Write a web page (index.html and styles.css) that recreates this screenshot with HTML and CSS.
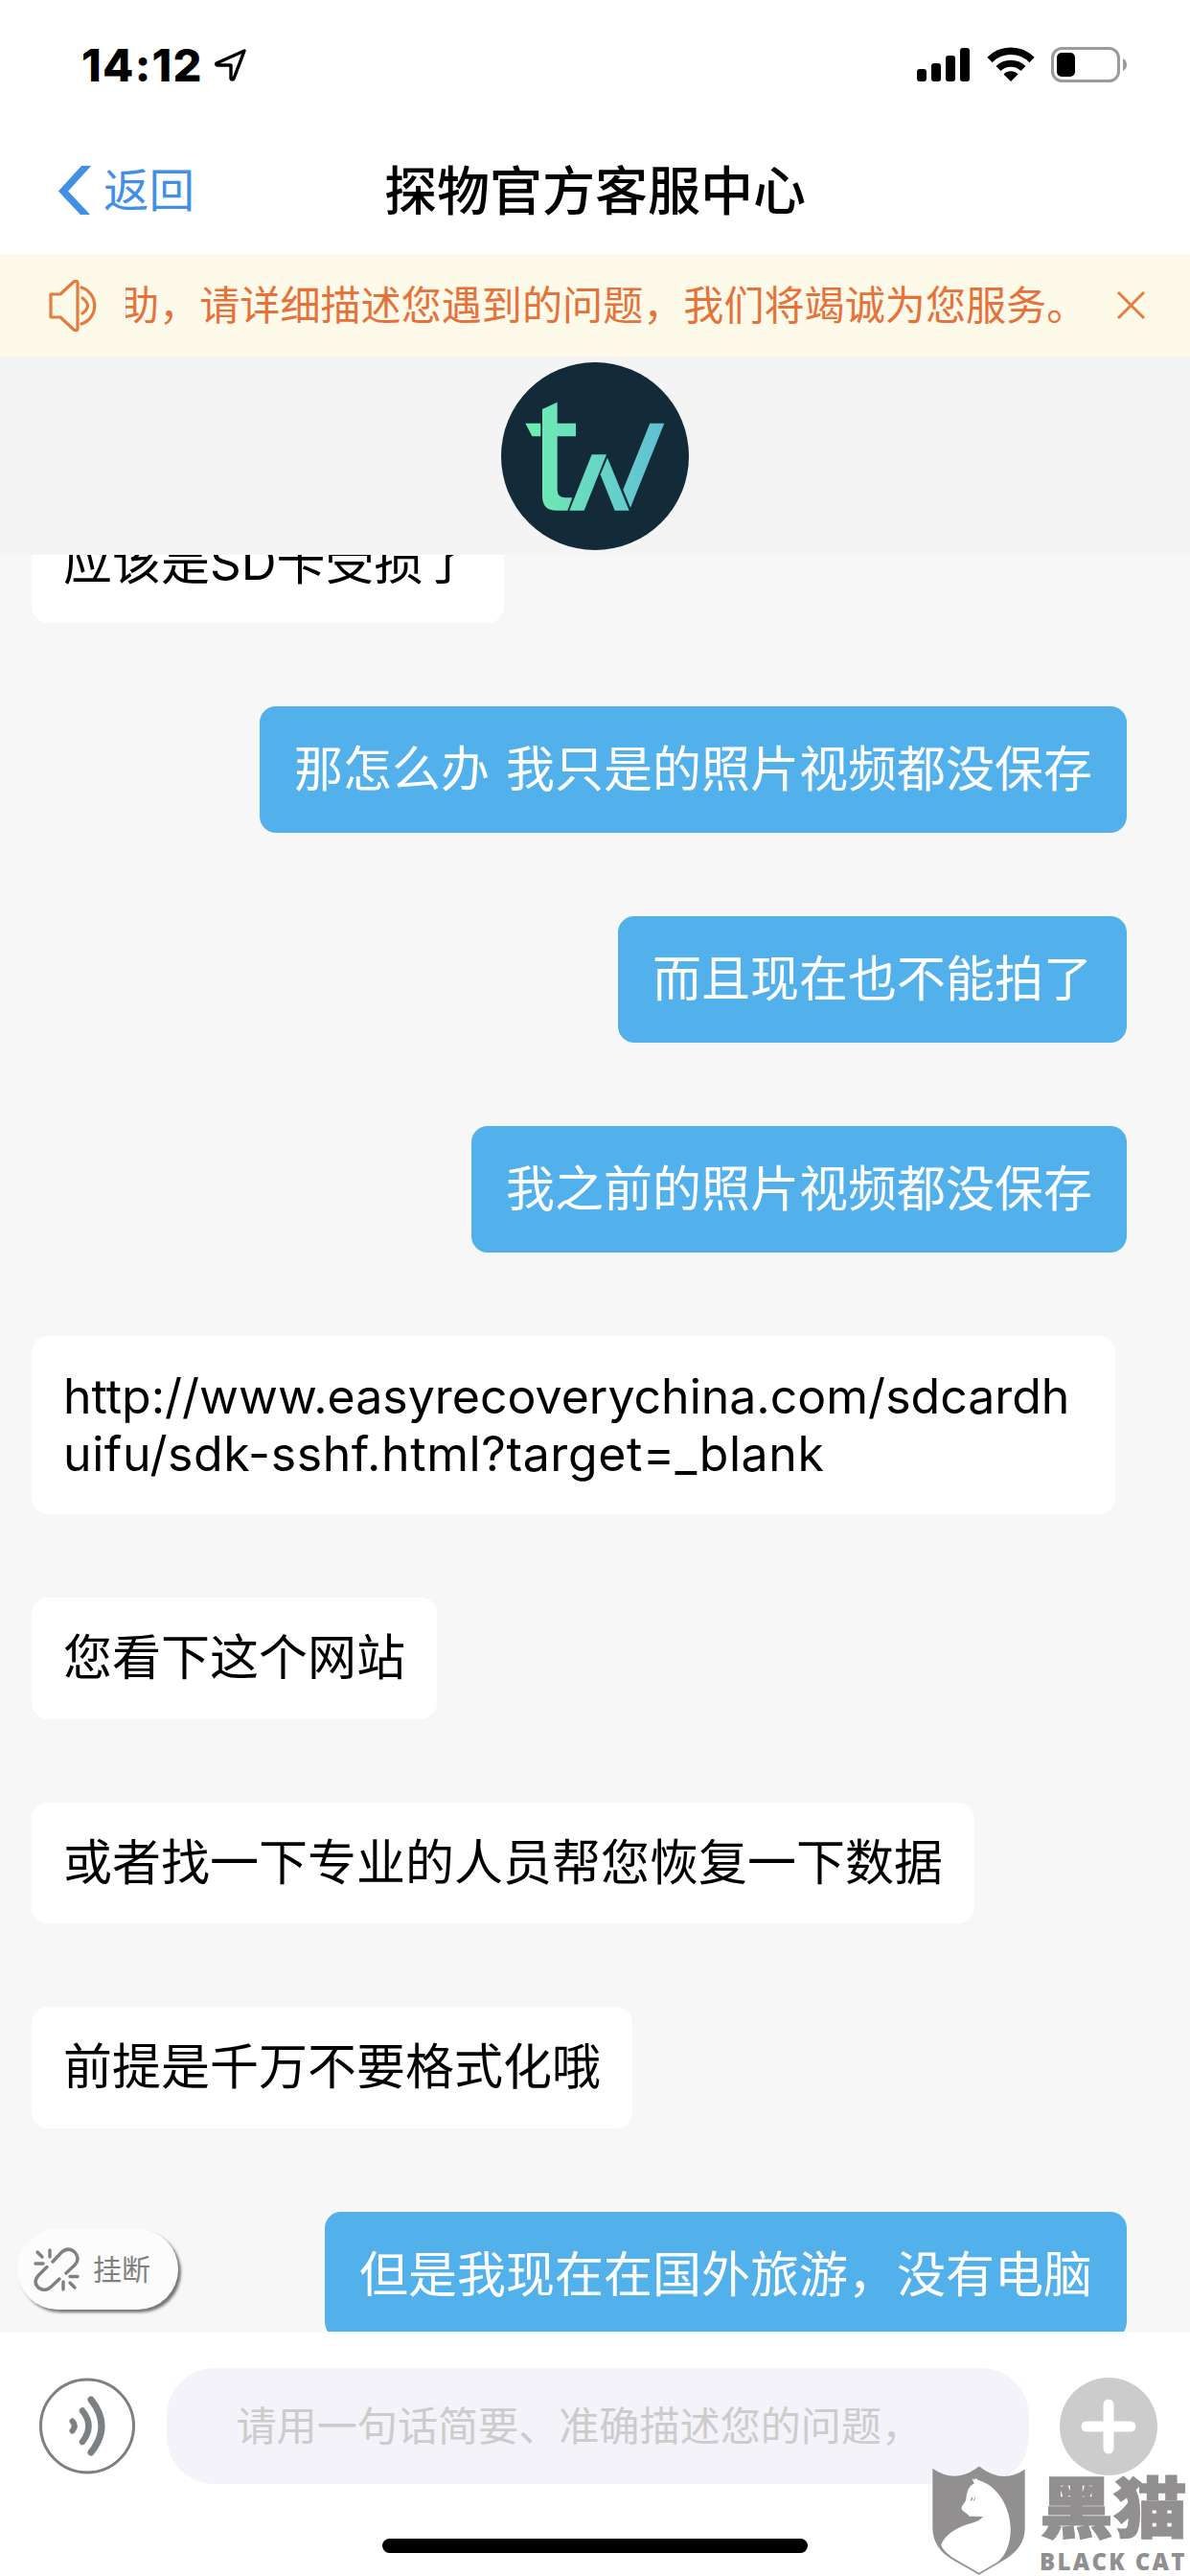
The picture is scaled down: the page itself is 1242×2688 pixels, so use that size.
FILE: index.html
```html
<!DOCTYPE html>
<html lang="zh-CN">
<head>
    <meta charset="UTF-8">
    <meta name="viewport" content="width=device-width, initial-scale=1.0">
    <title>探物官方客服中心</title>
    <link rel="stylesheet" href="styles.css">
</head>
<body>

    <div class="status-bar">
        <div class="status-left">
            <span class="time">14:12</span>
            <svg class="location" viewBox="0 0 34 34"><path d="M31 2 L2 15 Q1 17 3 17 L17 17 L17 31 Q18 33 20 31 Z" fill="none" stroke="#000" stroke-width="3.4" stroke-linejoin="round"/></svg>
        </div>
        <div class="status-right">
            <svg class="signal" viewBox="0 0 56 36">
                <rect x="0" y="22" width="10" height="13" rx="3"/>
                <rect x="15" y="16" width="10" height="19" rx="3"/>
                <rect x="30" y="8" width="10" height="27" rx="3"/>
                <rect x="45" y="0" width="10" height="35" rx="3"/>
            </svg>
            <svg class="wifi" viewBox="0 0 50 36">
                <path d="M3 13.5 A31 31 0 0 1 47 13.5" fill="none" stroke="#000" stroke-width="7.5"/>
                <path d="M12 22.5 A18.5 18.5 0 0 1 38 22.5" fill="none" stroke="#000" stroke-width="7"/>
                <path d="M25 36 L17.5 28.5 A10.5 10.5 0 0 1 32.5 28.5 Z"/>
            </svg>
            <svg class="battery" viewBox="0 0 80 37">
                <rect x="1.5" y="1.5" width="69" height="34" rx="10" fill="none" stroke="#9b9b9b" stroke-width="3"/>
                <rect x="6" y="6" width="19" height="25" rx="5"/>
                <path d="M75 12 Q79 14 79 18.5 Q79 23 75 25 Z" fill="#9b9b9b"/>
            </svg>
        </div>
    </div>

    <div class="nav-bar">
        <a class="back" href="#">
            <svg viewBox="0 0 36 51"><path d="M32 -2 L6 26.5 L31 53" fill="none" stroke="#4290e6" stroke-width="7.5"/></svg>
            <span>返回</span>
        </a>
        <h1>探物官方客服中心</h1>
        <div class="nav-space"></div>
    </div>

    <div class="notice">
        <svg class="speaker" viewBox="0 0 52 54" fill="none" stroke="#e77b3c" stroke-width="3.2" stroke-linejoin="round" stroke-linecap="round">
            <path d="M2 15 H12 L26 2 Q30 0 30 3 V51 Q30 54 26 52 L12 39 H2 Z"/>
            <path d="M34 8 A20 20 0 0 1 34 46"/>
            <path d="M35 19 Q46 27 35 35"/>
        </svg>
        <div class="notice-text"><span>助，请详细描述您遇到的问题，我们将竭诚为您服务。</span></div>
        <svg class="close" viewBox="0 0 30 30"><path d="M1 1 L29 29 M29 1 L1 29" stroke="#e77b3c" stroke-width="3"/></svg>
    </div>

    <div class="agent">
        <svg class="logo" viewBox="129 53 588 588">
            <defs>
                <linearGradient id="mint" gradientUnits="userSpaceOnUse" x1="205" y1="0" x2="640" y2="0">
                    <stop offset="0" stop-color="#70eeb0"/>
                    <stop offset="1" stop-color="#5fbfd6"/>
                </linearGradient>
            </defs>
            <circle cx="423" cy="347" r="294" fill="#132b38"/>
            <g fill="url(#mint)">
                <path d="M205 244 H253 V285 H226 Z"/>
                <path d="M258 200 L305 178 V244 H363 V285 H305 V452 Q305 477 330 477 H352 L337 517 H303 Q258 517 258 472 Z"/>
                <path d="M343 517 H389 L459 342 H413 Z"/>
                <path d="M462 352 L530 517 H485 L440 405 Z"/>
                <path d="M595 244 H640 L534 508 L511 452 Z"/>
            </g>
        </svg>
    </div>

    <div class="chat">
        <div class="msg">应该是SD卡受损了</div>
        <div class="msg mine">那怎么办 我只是的照片视频都没保存</div>
        <div class="msg mine">而且现在也不能拍了</div>
        <div class="msg mine">我之前的照片视频都没保存</div>
        <div class="msg link">http://www.easyrecoverychina.com/sdcardh<br><span class="line2">uifu/sdk-sshf.html?target=_blank</span></div>
        <div class="msg">您看下这个网站</div>
        <div class="msg">或者找一下专业的人员帮您恢复一下数据</div>
        <div class="msg">前提是千万不要格式化哦</div>
        <div class="msg mine">但是我现在在国外旅游，没有电脑</div>

        <button class="hang-up">
            <svg viewBox="0 0 48 46" fill="none" stroke="#808080" stroke-width="3.4" stroke-linecap="round">
                <path d="M20 15 L29 5.5 Q36 -1 43 5 Q49 12 43 18.5 L34 27"/>
                <path d="M14 20.5 L5 29.5 Q-1 36 5 42 Q12 47 18 41.5 L27 33"/>
                <path d="M4 5 L9 10 M17 3 V10 M2 17 H10 M38 30.5 H46 M31 36 V44 M38 37 L43 42"/>
            </svg>
            <span>挂断</span>
        </button>
    </div>

    <div class="footer">
        <div class="input-row">
            <svg class="voice" viewBox="0 0 100 101" fill="none" stroke="#7b8083" stroke-linecap="round">
                <circle cx="50" cy="50.5" r="48.5" stroke-width="3"/>
                <path d="M34.5 45.5 Q39 50.5 34.5 55.5" stroke-width="6"/>
                <path d="M45 34.5 Q58 50.5 45 67" stroke-width="6.5"/>
                <path d="M54 23 Q76 50.5 54 78" stroke-width="7"/>
            </svg>
            <div class="input">请用一句话简要、准确描述您的问题，</div>
            <svg class="plus" viewBox="0 0 102 102">
                <circle cx="51" cy="51" r="51" fill="#ccc"/>
                <path d="M51 28 V74 M28 51 H74" stroke="#fff" stroke-width="11" stroke-linecap="round"/>
            </svg>
        </div>
        <div class="home-bar"></div>
    </div>

    <div class="watermark">
        <svg class="shield" viewBox="69 69 292 345">
            <path d="M70 77 Q143 128 216 70 Q289 128 360 80 V262 C360 320 325 347 285 370 L216 411 L130 362 C95 340 70 310 70 262 Z" fill="#918f90"/>
            <path d="M194 108 L202 112 L206 107 L212 113 C260 125 312 180 315 265 C316 310 300 350 274 371 L216 405 L135 358 C115 345 100 330 97 316 C110 285 140 265 180 252 C205 246 220 240 228 228 L185 227 C178 215 160 212 161 200 C163 190 176 185 176 165 C180 140 188 130 201 124 Z" fill="#fff"/>
            <path d="M190 178 Q188 168 198 166 L193 178 Z M204 167 Q206 177 196 181 Z" fill="#918f90"/>
        </svg>
        <div class="brand">
            <div class="brand-cn">黑猫</div>
            <div class="brand-en">BLACK CAT</div>
        </div>
    </div>

</body>
</html>
```
FILE: styles.css
```css
* {
    box-sizing: border-box;
}
body {
    position: relative;
    margin: 0;
    width: 1242px;
    height: 2688px;
    display: flex;
    flex-direction: column;
    overflow: hidden;
    background-color: #fff;
    font-family: Inter, "Noto Sans CJK SC", sans-serif;
}
svg {
    display: block;
    flex: none;
}

/* Status bar */
.status-bar {
    height: 132px;
    padding: 49px 65px 0 85px;
    display: flex;
    justify-content: space-between;
}
.status-left, .status-right {
    display: flex;
}
.time {
    width: 139px;
    font-weight: 800;
    font-size: 47px;
    line-height: 37px;
    letter-spacing: 1.3px;
}
.location {
    width: 34px;
    height: 34px;
    margin-top: 2px;
}
.signal {
    width: 56px;
    height: 36px;
    margin: 1px 17px 0 0;
}
.wifi {
    width: 50px;
    height: 36px;
    margin-right: 17px;
}
.battery {
    width: 80px;
    height: 37px;
}

/* Navigation */
.nav-bar {
    height: 133px;
    padding: 0 60px;
    display: flex;
    justify-content: space-between;
    align-items: center;
}
.back {
    width: 150px;
    display: flex;
    align-items: center;
    color: #4290e6;
    font-size: 47.5px;
    line-height: 60px;
    text-decoration: none;
}
.back svg {
    width: 36px;
    height: 51px;
    margin-right: 12px;
}
.nav-space {
    width: 150px;
}
h1 {
    margin: 0;
    font-size: 55px;
    font-weight: 500;
    line-height: 66px;
    white-space: nowrap;
}

/* Notice */
.notice {
    height: 107px;
    padding: 0 47px 0 51px;
    display: flex;
    align-items: center;
    background-color: #fdfaea;
    color: #e5723a;
}
.speaker {
    width: 52px;
    height: 54px;
    margin-right: 28px;
}
.notice-text {
    width: 1000px;
    margin-right: 35px;
    display: flex;
    overflow: hidden;
    font-size: 42.1px;
    line-height: 60px;
    white-space: nowrap;
}
.notice-text span {
    margin-left: -7px;
}
.close {
    width: 29px;
    height: 29px;
}

.agent {
    height: 207px;
    padding-top: 6px;
    display: flex;
    justify-content: center;
    background-color: #f4f4f4;
}
.logo {
    width: 196px;
    height: 196px;
}

/* Chat */
.chat {
    position: relative;
    height: 1855px;
    padding: 0 66px 0 33px;
    display: flex;
    flex-direction: column;
    align-items: flex-start;
    gap: 87px;
    overflow: hidden;
    background-color: #f7f7f7;
    border-bottom: 1px solid #f7f7f7;
}
.msg {
    flex: none;
    padding: 33px;
    border-radius: 17px;
    background-color: #fff;
    color: #000;
    font-size: 51px;
    line-height: 60.5px;
    white-space: nowrap;
}
.msg:first-child {
    margin-top: -55.5px;
}
.mine {
    align-self: flex-end;
    padding: 36px;
    background-color: #52b1ea;
    color: #fff;
    line-height: 60px;
    word-spacing: 2.6px;
}
.link {
    width: 1131px;
    font-size: 50px;
    line-height: 60px;
}
.line2 {
    letter-spacing: 0.6px;
}
.hang-up {
    position: absolute;
    left: 18px;
    top: 1747px;
    width: 168px;
    height: 84px;
    padding: 0 0 0 17px;
    display: flex;
    align-items: center;
    border: none;
    border-radius: 42px;
    background-color: #fcfcfc;
    box-shadow: 3px 3px 3px #777;
    color: #808080;
    font-family: inherit;
    font-size: 30px;
    line-height: 40px;
}
.hang-up svg {
    width: 48px;
    height: 46px;
    margin-right: 14px;
}

/* Input */
.footer {
    height: 254px;
    padding: 37px 0 24px;
    display: flex;
    flex-direction: column;
    align-items: center;
    justify-content: space-between;
}
.input-row {
    width: 100%;
    padding: 0 34px 0 41px;
    display: flex;
    align-items: center;
    justify-content: space-between;
}
.voice {
    width: 100px;
    height: 101px;
}
.input {
    width: 900px;
    height: 121px;
    padding-left: 73px;
    border-radius: 50px;
    background-color: #f3f3f9;
    color: #ccc;
    font-size: 42.1px;
    line-height: 121px;
    white-space: nowrap;
}
.plus {
    width: 102px;
    height: 102px;
}
.home-bar {
    width: 444px;
    height: 15px;
    border-radius: 8px;
    background-color: #000;
}

/* Watermark sits over the input bar */
.watermark {
    position: absolute;
    left: 973px;
    top: 2573px;
    display: flex;
    gap: 15px;
    color: #918f90;
}
.shield {
    width: 97px;
    height: 115px;
}
.brand {
    display: flex;
    flex-direction: column;
    white-space: nowrap;
}
.brand-cn {
    height: 86px;
    font-size: 77px;
    font-weight: 900;
    line-height: 90px;
    transform: scaleY(0.9);
    -webkit-text-stroke: 1.5px #918f90;
}
.brand-en {
    font-family: "Open Sans", sans-serif;
    font-size: 24px;
    font-weight: 800;
    line-height: 27px;
    letter-spacing: 2.3px;
}
```
